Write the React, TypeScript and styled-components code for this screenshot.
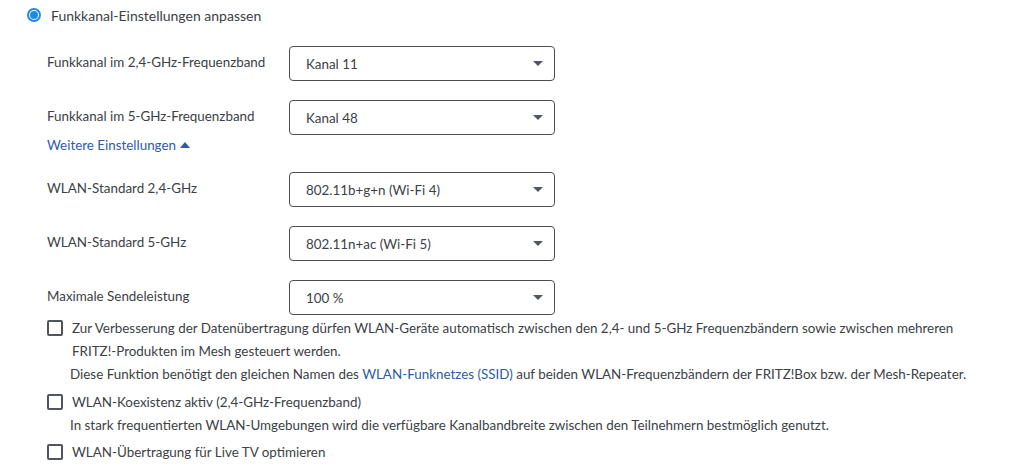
import React from 'react';
import styled, { createGlobalStyle } from 'styled-components';

const GlobalStyle = createGlobalStyle`
  body {
    margin: 0;
    background: #ffffff;
    font-family: 'Lato', 'Liberation Sans', sans-serif;
    color: #3c4146;
  }
`;

const Page = styled.div`
  padding: 5px 0 0 27px;
  width: 1015px;
  height: 474px;
  box-sizing: border-box;
  font-size: 13.4px;
`;

const RadioRow = styled.label`
  display: flex;
  align-items: center;
  gap: 10px;
  height: 20px;
  font-size: 14px;
`;

const RadioDot = styled.span`
  width: 14px;
  height: 14px;
  border: 2px solid #1f8ae6;
  border-radius: 50%;
  box-sizing: border-box;
  display: flex;
  align-items: center;
  justify-content: center;
  &::after {
    content: '';
    width: 8px;
    height: 8px;
    border-radius: 50%;
    background: #1f8ae6;
  }
`;

const Settings = styled.div`
  padding: 21px 0 0 20px;
  display: flex;
  flex-direction: column;
`;

const FieldRow = styled.div<{ $gap: number }>`
  display: grid;
  grid-template-columns: 242px 266px;
  align-items: center;
  margin-top: ${(p) => p.$gap}px;
`;

const FieldLabel = styled.span`
  margin-top: -3px;
`;

const SelectBox = styled.div`
  height: 35px;
  border: 1px solid #4b5056;
  border-radius: 4px;
  box-sizing: border-box;
  display: flex;
  align-items: center;
  justify-content: space-between;
  padding: 0 11px 0 16px;
`;

const Caret = styled.span<{ $up?: boolean }>`
  width: 0;
  height: 0;
  border-left: 5px solid transparent;
  border-right: 5px solid transparent;
  ${(p) =>
    p.$up
      ? 'border-bottom: 6px solid #2e5ba7;'
      : 'border-top: 5px solid #4f5862;'}
`;

const MoreLink = styled.a`
  color: #2e5ba7;
  text-decoration: none;
  display: flex;
  align-items: center;
  gap: 4px;
  margin-top: 1px;
  height: 18px;
`;

const Checks = styled.div`
  padding: 2px 0 0 20px;
  display: flex;
  flex-direction: column;
`;

const CheckRow = styled.label<{ $gap: number }>`
  display: grid;
  grid-template-columns: 16px 1fr;
  column-gap: 9px;
  line-height: 23px;
  margin-top: ${(p) => p.$gap}px;
`;

const Box = styled.span`
  width: 16px;
  height: 16px;
  border: 2px solid #50555b;
  border-radius: 2px;
  box-sizing: border-box;
  margin-top: 3px;
`;

const CheckText = styled.span`
  max-width: 895px;
`;

const Hint = styled.p`
  margin: 0;
  grid-column: 2;
  margin-left: -2px;
  line-height: 23px;
`;

const Link = styled.a`
  color: #2e5ba7;
  text-decoration: none;
`;

const fields = [
  { label: 'Funkkanal im 2,4-GHz-Frequenzband', value: 'Kanal 11', gap: 0 },
  { label: 'Funkkanal im 5-GHz-Frequenzband', value: 'Kanal 48', gap: 19 },
];

const fields2 = [
  { label: 'WLAN-Standard 2,4-GHz', value: '802.11b+g+n (Wi-Fi 4)', gap: 18 },
  { label: 'WLAN-Standard 5-GHz', value: '802.11n+ac (Wi-Fi 5)', gap: 19 },
  { label: 'Maximale Sendeleistung', value: '100 %', gap: 19 },
];

const Field = ({ label, value, gap }: { label: string; value: string; gap: number }) => (
  <FieldRow $gap={gap}>
    <FieldLabel>{label}</FieldLabel>
    <SelectBox>
      <span>{value}</span>
      <Caret />
    </SelectBox>
  </FieldRow>
);

export default function App() {
  return (
    <Page>
      <GlobalStyle />
      <RadioRow>
        <RadioDot />
        Funkkanal-Einstellungen anpassen
      </RadioRow>
      <Settings>
        {fields.map((f) => (
          <Field key={f.label} {...f} />
        ))}
        <MoreLink href="#">
          Weitere Einstellungen <Caret $up />
        </MoreLink>
        {fields2.map((f) => (
          <Field key={f.label} {...f} />
        ))}
      </Settings>
      <Checks>
        <CheckRow $gap={0}>
          <Box />
          <CheckText>
            Zur Verbesserung der Datenübertragung dürfen WLAN-Geräte automatisch zwischen den 2,4- und
            5-GHz Frequenzbändern sowie zwischen mehreren FRITZ!-Produkten im Mesh gesteuert werden.
          </CheckText>
          <Hint>
            Diese Funktion benötigt den gleichen Namen des <Link href="#">WLAN-Funknetzes (SSID)</Link> auf
            beiden WLAN-Frequenzbändern der FRITZ!Box bzw. der Mesh-Repeater.
          </Hint>
        </CheckRow>
        <CheckRow $gap={5}>
          <Box />
          <CheckText>WLAN-Koexistenz aktiv (2,4-GHz-Frequenzband)</CheckText>
          <Hint>
            In stark frequentierten WLAN-Umgebungen wird die verfügbare Kanalbandbreite zwischen den
            Teilnehmern bestmöglich genutzt.
          </Hint>
        </CheckRow>
        <CheckRow $gap={4}>
          <Box />
          <CheckText>WLAN-Übertragung für Live TV optimieren</CheckText>
        </CheckRow>
      </Checks>
    </Page>
  );
}
